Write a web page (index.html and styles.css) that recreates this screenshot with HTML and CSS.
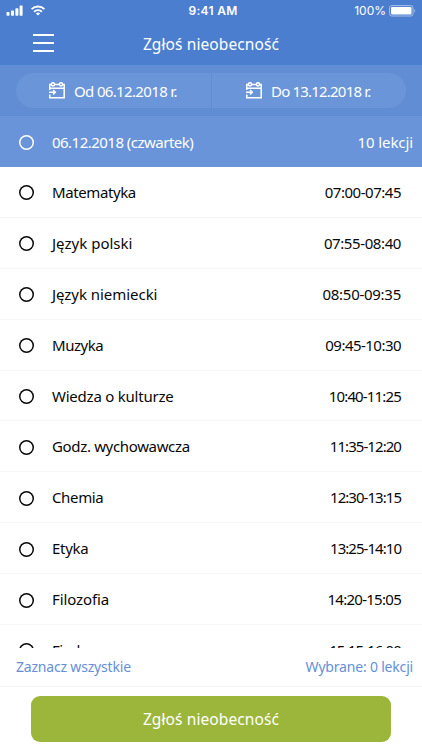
FILE: index.html
```
<!DOCTYPE html>
<html lang="pl">
<head>
<meta charset="utf-8">
<title>Zgłoś nieobecność</title>
<link rel="stylesheet" href="styles.css">
</head>
<body>
<div class="app">
  <header class="top">
    <div class="status">
      <div class="signal">
        <svg width="40" height="12" viewBox="0 0 40 12" fill="#fff"><rect x="0.5" y="7" width="3" height="3.7" rx=".7"/><rect x="5" y="5.4" width="3" height="5.3" rx=".7"/><rect x="9.4" y="3.3" width="3" height="7.4" rx=".7"/><rect x="13.6" y=".4" width="3" height="10.3" rx=".7"/><g fill="none" stroke="#fff" stroke-width="1.9"><path d="M25.6 4.1a9.2 9.2 0 0 1 12.8 0M28.1 6.7a5.6 5.6 0 0 1 7.8 0"/></g><path d="M29.9 8.5a3 3 0 0 1 4.2 0L32 10.6z"/></svg>
      </div>
      <span class="clock">9:41 AM</span>
      <div class="power"><span>100%</span>
        <svg width="28" height="12" viewBox="0 0 28 12"><rect x=".5" y=".6" width="23.5" height="10.4" rx="2.2" fill="none" stroke="#a9c0ea"/><rect x="2" y="2" width="20.5" height="7.6" rx="1" fill="#fff"/><path d="M25.3 4q2 1.8 0 3.6z" fill="#a9c0ea"/></svg>
      </div>
    </div>
    <div class="nav">
      <div class="menu"><i></i><i></i><i></i></div>
      <h1>Zgłoś nieobecność</h1>
      <span></span>
    </div>
  </header>
  <div class="dates">
    <div class="pill">
      <div class="date from">
        <svg class="cal" viewBox="0 0 16 17"><path d="M.8 8V2.4h2M5.2 2.4h5.6M13.2 2.4h2v13.3H.8v-3.2M.8 6.2h14.4M0 10.2h6M4 8l2.3 2.2L4 12.4"/><circle cx="4" cy="2.3" r="1.6"/><circle cx="12" cy="2.3" r="1.6"/></svg>
        <span>Od 06.12.2018 r.</span>
      </div>
      <div class="date to">
        <svg class="cal" viewBox="0 0 16 17"><path d="M.8 8V2.4h2M5.2 2.4h5.6M13.2 2.4h2v13.3H.8v-3.2M.8 6.2h14.4M0 10.2h6M4 8l2.3 2.2L4 12.4"/><circle cx="4" cy="2.3" r="1.6"/><circle cx="12" cy="2.3" r="1.6"/></svg>
        <span>Do 13.12.2018 r.</span>
      </div>
    </div>
  </div>
  <div class="day"><i class="radio"></i><span class="dayname">06.12.2018 (czwartek)</span><span class="count">10 lekcji</span></div>
  <main class="list">
    <div class="row"><i class="radio"></i><span class="name n1">Matematyka</span><span class="time t1">07:00-07:45</span></div>
    <div class="row"><i class="radio"></i><span class="name n2">Język polski</span><span class="time t2">07:55-08:40</span></div>
    <div class="row"><i class="radio"></i><span class="name n3">Język niemiecki</span><span class="time t3">08:50-09:35</span></div>
    <div class="row"><i class="radio"></i><span class="name n4">Muzyka</span><span class="time t4">09:45-10:30</span></div>
    <div class="row"><i class="radio"></i><span class="name n5">Wiedza o kulturze</span><span class="time t5">10:40-11:25</span></div>
    <div class="row"><i class="radio"></i><span class="name n6">Godz. wychowawcza</span><span class="time t6">11:35-12:20</span></div>
    <div class="row"><i class="radio"></i><span class="name n7">Chemia</span><span class="time t7">12:30-13:15</span></div>
    <div class="row"><i class="radio"></i><span class="name n8">Etyka</span><span class="time t8">13:25-14:10</span></div>
    <div class="row"><i class="radio"></i><span class="name n9">Filozofia</span><span class="time t9">14:20-15:05</span></div>
    <div class="row"><i class="radio"></i><span class="name n10">Fizyka</span><span class="time t10">15:15-16:00</span></div>
  </main>
  <div class="summary"><span class="all">Zaznacz wszystkie</span><span class="selected">Wybrane: 0 lekcji</span></div>
  <footer><button>Zgłoś nieobecność</button></footer>
</div>
</body>
</html>
```
FILE: styles.css
```
* { box-sizing: border-box; }
body { margin: 0; background: #fff; font: 15px/20px "Noto Sans", "Open Sans", sans-serif; color: #111; }
.app { width: 422px; height: 750px; overflow: hidden; display: flex; flex-direction: column; white-space: nowrap; }
.top { height: 65px; flex: none; background: #4c7ed0; color: #fff; }
.status { height: 22px; display: grid; grid-template-columns: 1fr auto 1fr; align-items: center; padding: 0 5px 0 6px; font: 12px/14px Inter, sans-serif; }
.status svg { display: block; }
.clock { font-weight: 600; letter-spacing: .3px; padding-left: 3px; }
.power { display: flex; justify-content: flex-end; align-items: center; gap: 3px; }
.nav { height: 43px; display: grid; grid-template-columns: 110px 1fr 110px; align-items: center; }
.menu { width: 21px; height: 18px; margin: -1px 0 0 33px; display: flex; flex-direction: column; justify-content: space-between; }
.menu i { height: 2px; background: #fff; }
h1, button { font: 15.5px/22px "Noto Sans", sans-serif; letter-spacing: .1px; text-align: center; margin: 0; color: #fff; }
.dates { height: 51px; flex: none; background: #618dd5; padding: 8px 16px; }
.pill { height: 35px; border-radius: 18px; display: grid; grid-template-columns: 1fr 1fr; background: #6b95d9; color: #fff; }
.date { display: flex; align-items: center; gap: 9px; padding-left: 33px; letter-spacing: -.65px; }
.date + .date { border-left: 1px solid #618dd5; padding-left: 34px; letter-spacing: -.8px; }
.cal { width: 16px; height: 17px; flex: none; fill: none; stroke: #fff; stroke-width: 1.5; }
.day, .row { display: flex; align-items: center; padding-left: 19px; }
.day { height: 51px; flex: none; background: #6994d9; color: #fff; padding-right: 9px; }
.radio { width: 15px; height: 15px; box-shadow: inset 0 0 0 1.5px currentColor; border-radius: 50%; flex: none; margin: 2px 18px 0 0; }
.dayname { letter-spacing: -.52px; }
.count, .time { margin-left: auto; }
.count { letter-spacing: -.1px; }
.list { height: 481px; flex: none; overflow: hidden; }
.row { height: 50.9px; padding-right: 21px; border-bottom: 1px solid #f7f7fa; color: #080808; }
.n1 { letter-spacing: -.4px; }
.n2 { letter-spacing: .02px; }
.n3 { letter-spacing: -.04px; }
.n4, .n10 { letter-spacing: -.48px; }
.n5 { letter-spacing: -.23px; }
.n6 { letter-spacing: -.34px; }
.n7 { letter-spacing: -.36px; }
.n8 { letter-spacing: -.3px; }
.n9 { letter-spacing: -.1px; }
.t1 { letter-spacing: -.48px; }
.t2 { letter-spacing: -.4px; }
.t3 { letter-spacing: -.27px; }
.t4 { letter-spacing: -.53px; }
.t5 { letter-spacing: -.84px; }
.t6 { letter-spacing: -.94px; }
.t7, .t8 { letter-spacing: -.96px; }
.t9 { letter-spacing: -.72px; }
.t10 { letter-spacing: -.88px; }
.summary { height: 39px; flex: none; display: flex; justify-content: space-between; align-items: center; padding: 0 9px 0 16px; color: #6590d8; font-size: 14px; letter-spacing: -.19px; border-bottom: 1px solid #f7f7fa; }
footer { padding: 9px 31px; }
button { display: block; width: 100%; height: 46px; padding: 0; border: 0; border-radius: 9px; background: #9cb63b; }
```
